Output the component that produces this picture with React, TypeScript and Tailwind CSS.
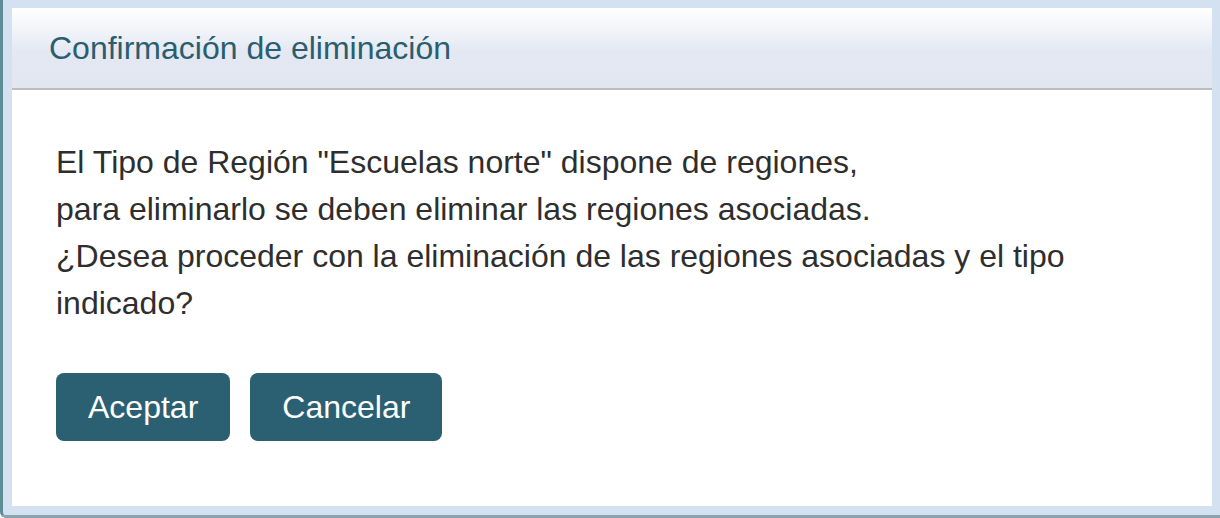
export default function App() {
  return (
    <div className="w-[1220px] h-[518px] bg-[#d4e1f1] border-l-[3px] border-b-[3px] border-l-[#5d8c98] border-b-[#8aa4ad] rounded-bl-[6px] pt-[8px] pr-[8px] pb-[9px] pl-[9px] font-['Liberation_Sans',Arial,sans-serif]">
      <div className="h-full flex flex-col bg-white">
        <div className="h-[82px] shrink-0 flex items-center pl-[37px] border-b-2 border-[#bcbcbc] bg-[linear-gradient(to_bottom,#ffffff_0%,#e3e8f2_55%,#e1e6f0_100%)]">
          <h1 className="text-[32px] leading-none text-[#2a5e6f]">Confirmación de eliminación</h1>
        </div>
        <div className="pl-[44px] pt-[49px]">
          <p className="text-[32px] leading-[47px] text-[#2e2e2e]">
            El Tipo de Región "Escuelas norte" dispone de regiones,
            <br />
            para eliminarlo se deben eliminar las regiones asociadas.
            <br />
            ¿Desea proceder con la eliminación de las regiones asociadas y el tipo
            <br />
            indicado?
          </p>
          <div className="flex gap-[20px] mt-[46px]">
            <button className="h-[68px] px-[32px] rounded-[8px] bg-[#2b5f72] text-white text-[32px] leading-none">
              Aceptar
            </button>
            <button className="h-[68px] px-[32px] rounded-[8px] bg-[#2b5f72] text-white text-[32px] leading-none">
              Cancelar
            </button>
          </div>
        </div>
      </div>
    </div>
  );
}
